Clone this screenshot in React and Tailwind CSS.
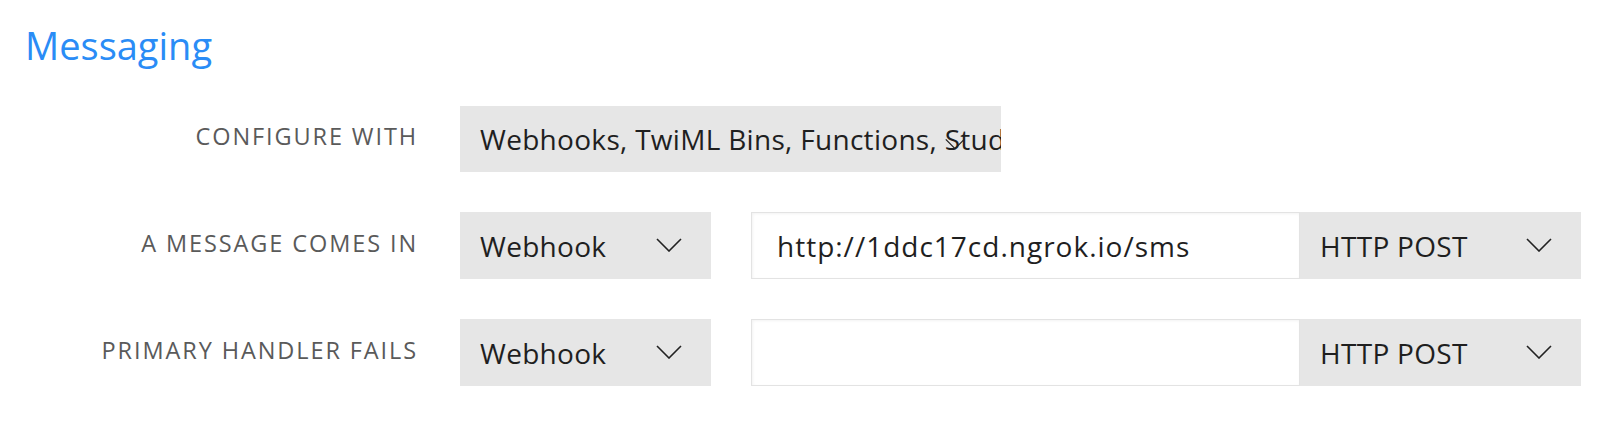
const font = { fontFamily: '"Open Sans", "Liberation Sans", sans-serif' }

function Chevron({ className }) {
  return (
    <svg className={className} viewBox="0 0 26 14" fill="none" stroke="#222" strokeWidth="1.6">
      <path d="M1 1l12 12L25 1" />
    </svg>
  )
}

function Select({ value, className, clip }) {
  return (
    <div className={`relative flex h-full items-center overflow-hidden bg-[#e6e6e6] pl-5 text-[28px] text-[#1f1f1f] ${className}`}>
      <span className="whitespace-nowrap tracking-[0.3px]">{value}</span>
      {clip ? (
        <Chevron className="absolute right-[36px] top-[32px] h-[12px] w-[20px]" />
      ) : (
        <Chevron className="absolute right-[29px] top-[26px] h-[14px] w-[26px]" />
      )}
    </div>
  )
}

function Label({ children }) {
  return (
    <div className="w-[418px] shrink-0 pb-1 text-right text-[23.5px] uppercase tracking-[1.9px] text-[#5a5a5a]">
      {children}
    </div>
  )
}

export default function App() {
  return (
    <div className="h-[430px] w-[1600px] bg-white" style={font}>
      <h2 className="pl-[25px] pt-[19px] text-[38px] leading-[52px] text-[#2a8cf6]">Messaging</h2>
      <div className="mt-[35px] flex flex-col gap-[40px]">
        <div className="flex h-[66px] items-center">
          <Label>Configure with</Label>
          <Select className="ml-[42px] w-[541px]" value="Webhooks, TwiML Bins, Functions, Studio, or Proxy" clip />
        </div>
        <div className="flex h-[67px] items-center">
          <Label>A message comes in</Label>
          <Select className="ml-[42px] w-[251px]" value="Webhook" />
          <div className="ml-[40px] flex h-full w-[549px] items-center border border-[#e3e3e3] bg-white pl-[25px] text-[28px] tracking-[1px] text-[#1f1f1f] shadow-[inset_1px_1px_3px_rgba(0,0,0,0.05)]">
            http://1ddc17cd.ngrok.io/sms
          </div>
          <Select className="w-[281px]" value="HTTP POST" />
        </div>
        <div className="flex h-[67px] items-center">
          <Label>Primary handler fails</Label>
          <Select className="ml-[42px] w-[251px]" value="Webhook" />
          <div className="ml-[40px] h-full w-[549px] border border-[#e3e3e3] bg-white shadow-[inset_1px_1px_3px_rgba(0,0,0,0.05)]" />
          <Select className="w-[281px]" value="HTTP POST" />
        </div>
      </div>
    </div>
  )
}
